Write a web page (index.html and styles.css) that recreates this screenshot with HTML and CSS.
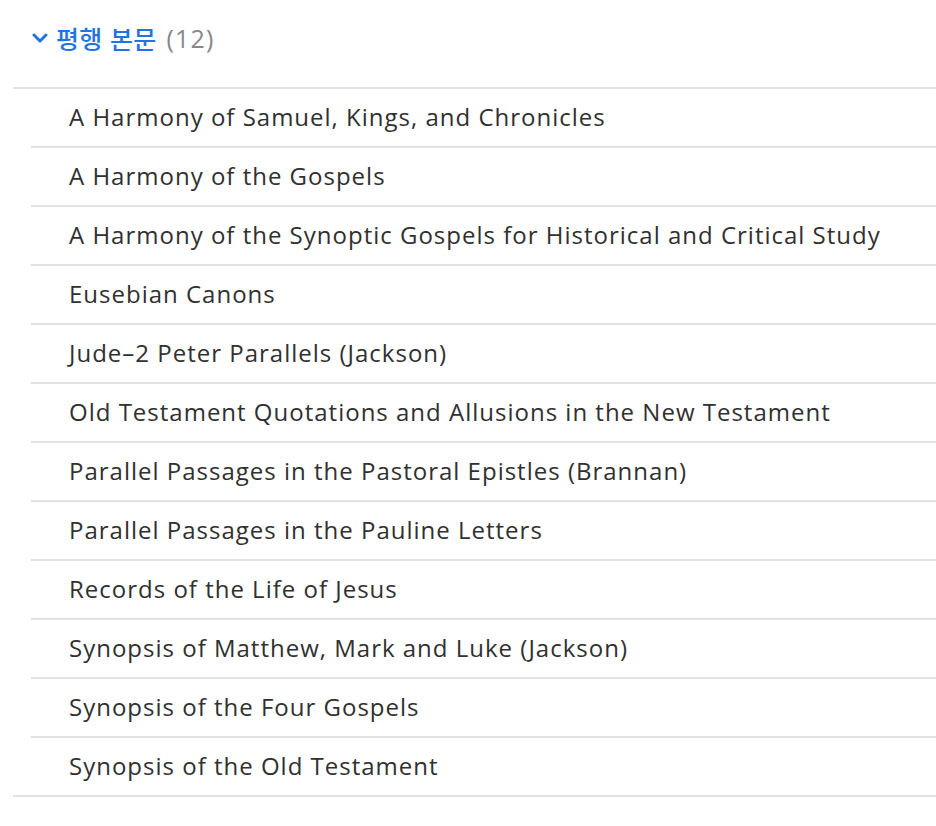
FILE: index.html
```html
<!DOCTYPE html>
<html lang="ko">
<head>
<meta charset="utf-8">
<link rel="stylesheet" href="styles.css">
</head>
<body>
<section class="group">
  <div class="group-header">
    <svg class="chevron" width="16" height="10" viewBox="0 0 16 10"><path d="M2 2 L8 8 L14 2" fill="none" stroke="#1f74e0" stroke-width="3" stroke-linecap="round" stroke-linejoin="round"/></svg>
    <span class="title">평행 본문</span>
    <span class="count">(12)</span>
  </div>
  <ul class="list">
    <li class="item">A Harmony of Samuel, Kings, and Chronicles</li>
    <li class="item">A Harmony of the Gospels</li>
    <li class="item">A Harmony of the Synoptic Gospels for Historical and Critical Study</li>
    <li class="item">Eusebian Canons</li>
    <li class="item">Jude–2 Peter Parallels (Jackson)</li>
    <li class="item">Old Testament Quotations and Allusions in the New Testament</li>
    <li class="item">Parallel Passages in the Pastoral Epistles (Brannan)</li>
    <li class="item">Parallel Passages in the Pauline Letters</li>
    <li class="item">Records of the Life of Jesus</li>
    <li class="item">Synopsis of Matthew, Mark and Luke (Jackson)</li>
    <li class="item">Synopsis of the Four Gospels</li>
    <li class="item">Synopsis of the Old Testament</li>
  </ul>
</section>
</body>
</html>
```
FILE: styles.css
```css
html, body {
  margin: 0;
  padding: 0;
  background: #ffffff;
}
body {
  font-family: "Open Sans", "Noto Sans CJK KR", sans-serif;
  color: #303030;
}
.group {
  margin-left: 13px;
}
.group-header {
  display: flex;
  align-items: center;
  box-sizing: border-box;
  height: 89px;
  padding-left: 19px;
  padding-bottom: 11px;
  border-bottom: 2px solid #e2e2e2;
}
.chevron {
  margin-right: 8px;
  margin-top: 0;
}
.title {
  color: #1f74e0;
  font-family: "Noto Sans CJK KR", sans-serif;
  font-weight: 500;
  font-size: 25px;
  letter-spacing: 0.3px;
}
.count {
  color: #888888;
  margin-left: 10px;
  font-size: 25px;
  letter-spacing: 1.2px;
}
.list {
  list-style: none;
  margin: 0;
  padding: 0;
  border-bottom: 2px solid #e2e2e2;
}
.item {
  margin-left: 18px;
  height: 59px;
  box-sizing: border-box;
  display: flex;
  align-items: center;
  padding-left: 38px;
  font-size: 24px;
  letter-spacing: 1px;
  border-top: 2px solid #e2e2e2;
  padding-bottom: 3px;
}
.item:first-child {
  border-top: none;
  height: 57px;
}
```
